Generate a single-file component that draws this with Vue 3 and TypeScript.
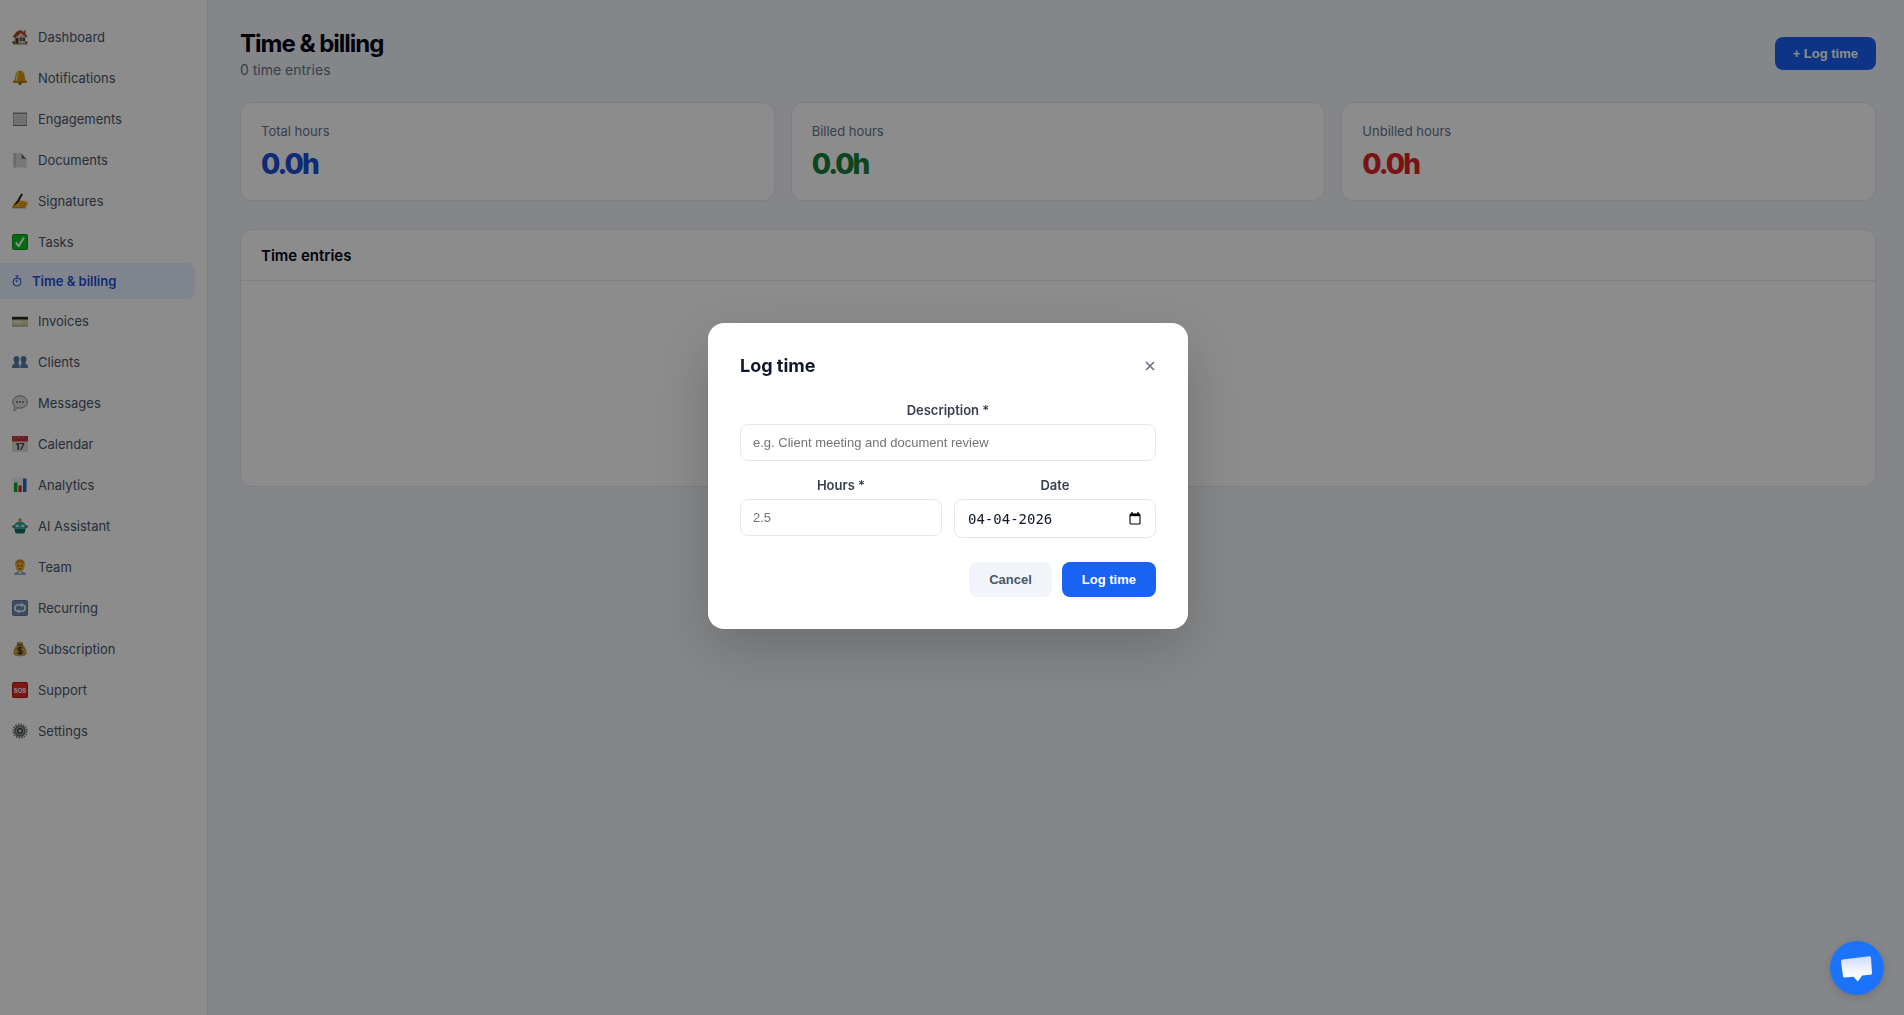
<script setup lang="ts">
import { ref } from 'vue'

interface NavItem {
  label: string
  icon: string
  active?: boolean
}

const nav: NavItem[] = [
  {
    label: 'Dashboard',
    icon: '<path d="M1 14h14v1.500H1z" fill="#5b8a3c"/><path d="M2.500 7l5-4.500 6 5V14.500h-11z" fill="#e0c3b4"/><path d="M11.500 1.500h2V6h-2z" fill="#a5553f"/><path d="M.5 7.800L5 2.200 9 1l6.500 6.300-1.300 1.200L8.800 3.800 3.200 9z" fill="#a8452f"/><path d="M3.500 9h3v5.500h-3z" fill="#5c3527"/><path d="M8 8.500h5v3.500H8z" fill="#3f5570"/><path d="M10.500 8.500V12" stroke="#e0c3b4" stroke-width=".7"/><circle cx="1.800" cy="13.300" r="1.500" fill="#4c7a34"/><circle cx="14.200" cy="13.500" r="1.300" fill="#a5553f"/>',
  },
  {
    label: 'Notifications',
    icon: '<circle cx="8" cy="13.500" r="1.600" fill="#7a5a10"/><path d="M8 .8c3 0 4.300 2 4.600 5 .3 3 .9 4.600 2.900 6.200-.3 1.300-14.700 1.300-15 0C2.500 10.400 3 8.800 3.400 5.800 3.700 2.800 5 .8 8 .8z" fill="#cf9a14"/><path d="M6 2.500c-1 2-.8 5.500-2 8.500" stroke="#ffe070" stroke-width="1.200" fill="none"/><path d="M1 12h14" stroke="#8b6408" stroke-width="1"/>',
  },
  {
    label: 'Engagements',
    icon: '<path d="M1 2h14v13H1z" fill="#d2d2d0"/><path d="M1 1.500h14V3H1z" fill="#858585"/><path d="M1 14h14v1H1z" fill="#7a746c"/><path d="M1.500 3v11M14.500 3v11" stroke="#a5a5a5"/><path d="M4 6h8M4 8.500h8M4 11h8" stroke="#c2c2c2"/>',
  },
  {
    label: 'Documents',
    icon: '<path d="M1.500 1H9l5.500 6v8.500h-13z" fill="#dadada"/><path d="M1.500 1H4v14.500H1.500z" fill="#c4c4c4"/><path d="M9 1c.8 2 .8 3.500.5 5.500 2-.3 3.500 0 5 .9z" fill="#5c5c5c"/>',
  },
  {
    label: 'Signatures',
    icon: '<path d="M0 14.500c.5-2.500 2-5 4.500-6.500l3-.8 5.500.8c2 .4 3 1.300 2.800 2.500-.4 3-3 4-6 4.200z" fill="#f5ae1b"/><path d="M8 10.200l6 .8M7.500 12.500h6" stroke="#c47e0c" stroke-width=".8"/><path d="M1 14l3-4.500L9.200.5l1.800.8-4.600 8.200z" fill="#262626"/><path d="M0 14.800h14" stroke="#9a6510" stroke-width=".9"/>',
  },
  {
    label: 'Tasks',
    icon: '<rect x="0" y="0" width="16" height="16" rx="2.500" fill="#10c024"/><rect x=".5" y=".5" width="15" height="15" rx="2" fill="none" stroke="#0b971b"/><path d="M3.800 8.500L6.700 12 12 3.500" fill="none" stroke="#fff" stroke-width="2"/>',
  },
  { label: 'Time & billing', icon: '', active: true },
  {
    label: 'Invoices',
    icon: '<rect x="0" y="3" width="16" height="10.500" rx="1" fill="#d8d0a8"/><path d="M0 4h16v2.500H0z" fill="#222a20"/><path d="M2 9h8" stroke="#f2efdc" stroke-width="1.500"/><path d="M0 12.500h16v1H0z" fill="#a9a27e"/>',
  },
  {
    label: 'Clients',
    icon: '<path d="M4.500 2c1.900 0 2.900 1.300 2.800 3.200-.1 2-.9 3-1 4.800 1.100.3 1.500 1.200 1.500 4H0c0-3 .9-3.600 2.700-4.200C2.700 8.300 1.700 7.400 1.500 5.200 1.500 3.200 2.700 2 4.500 2z" fill="#547ca5"/><path d="M11.500 2c2 0 3 1.200 3 3.200-.1 2.200-1 3.100-1.100 4.600 1.800.6 2.600 1.200 2.600 4.200H8.400c0-2.800.1-3.700 1.200-4.200 0-1.600-1-2.600-1-4.600C8.600 3.200 9.700 2 11.500 2z" fill="#547ca5"/>',
  },
  {
    label: 'Messages',
    icon: '<ellipse cx="8" cy="7" rx="7.300" ry="6.200" fill="#e2e2e2" stroke="#858585"/><path d="M2 11.500c.5 1.500.3 2.500-.5 4 2.500-.3 3.500-1.300 4-2.800" fill="#e2e2e2" stroke="#858585" stroke-width=".8"/><circle cx="5" cy="7" r=".9" fill="#555"/><circle cx="8" cy="7" r=".9" fill="#555"/><circle cx="11" cy="7" r=".9" fill="#555"/>',
  },
  {
    label: 'Calendar',
    icon: '<path d="M0 5h16v11H0z" fill="#dfddd6"/><path d="M0 0h16v5.500H0z" fill="#c3343c"/><path d="M2 1.500h12" stroke="#e9a0a3" stroke-width=".8" stroke-dasharray="1.500 2.500"/><text x="8" y="13.800" text-anchor="middle" font-size="9" font-weight="700" font-family="Inter, sans-serif" fill="#333">17</text>',
  },
  {
    label: 'Analytics',
    icon: '<rect x=".5" y=".5" width="15" height="15" fill="#eee"/><path d="M2 5.500h3.400V15H2z" fill="#10a32f"/><path d="M6.500 8.500h3.200V15H6.500z" fill="#c72a36"/><path d="M11 1.500h3.400V15H11z" fill="#1868c4"/>',
  },
  {
    label: 'AI Assistant',
    icon: '<circle cx="8" cy="2" r="1.700" fill="#c88a3a"/><circle cx="1.800" cy="8.500" r="1.600" fill="#b1323c"/><circle cx="14.200" cy="8.500" r="1.600" fill="#b1323c"/><path d="M4 4.800C5.500 3.400 10.500 3.400 12 4.800l2.300 2.700c1 1.300.3 3-1 3.800H2.700C1.400 10.500.7 8.800 1.700 7.500z" fill="#3aa898"/><path d="M2.500 11h11l-.5 3c-.3 1.100-1 1.500-2 1.500H5c-1 0-1.700-.4-2-1.500z" fill="#167568"/><ellipse cx="5.300" cy="8" rx="1.700" ry="1.300" fill="#b9f0e6"/><ellipse cx="10.700" cy="8" rx="1.700" ry="1.300" fill="#b9f0e6"/><path d="M5 12.800h6" stroke="#0b5148"/>',
  },
  {
    label: 'Team',
    icon: '<path d="M2 16c0-2.500 2-3.500 6-3.500s6 1 6 3.500z" fill="#8db0cf"/><path d="M6 12h4l-2 3.500z" fill="#f1f1f1"/><ellipse cx="8" cy="6.800" rx="4.600" ry="6" fill="#eeb02b"/><path d="M3.300 6C3 2 5 .4 8 .4s5 1.600 4.700 5.600C12 4 11 3.500 9 3.500S4.500 4 3.300 6z" fill="#c98f1f"/><circle cx="6.200" cy="6.800" r=".7" fill="#41300c"/><circle cx="9.800" cy="6.800" r=".7" fill="#41300c"/><path d="M6.300 9.800h3.400" stroke="#7a5110" stroke-width=".9"/>',
  },
  {
    label: 'Recurring',
    icon: '<rect x="0" y="0" width="16" height="16" rx="2.500" fill="#6f8fb4"/><rect x=".5" y=".5" width="15" height="15" rx="2" fill="none" stroke="#5b7ba3"/><path d="M10 5H6C2 5 2 10.500 5 11M6.500 11.200H10c4-.2 4-5.700 1-6" fill="none" stroke="#eef3f8" stroke-width="1.600"/><path d="M9 2.800L12 5 9 7.200zM7.500 9L4.500 11.200l3 2.200z" fill="#eef3f8"/>',
  },
  {
    label: 'Subscription',
    icon: '<path d="M5.500 3.500L4.500 1l2 .6L8 .3l1.500 1.300 2-.6-1 2.500c3 2.500 4.500 6 4 9.500-.5 3-12.500 3-13 0-.5-3.500 1-7 4-9.500z" fill="#c79b45"/><path d="M5 3.800h6" stroke="#6b4a14" stroke-width="1.200"/><path d="M10.300 7.200C9 6 5.800 6.200 5.900 8c.1 1.700 4.300 1.200 4.400 3 .1 1.900-3.300 2.100-4.700.8M8 5.500v8.300" fill="none" stroke="#2e2a1c" stroke-width="1.200"/>',
  },
  {
    label: 'Support',
    icon: '<rect x="0" y="0" width="16" height="16" rx="2.500" fill="#e22a22"/><rect x=".5" y=".5" width="15" height="15" rx="2" fill="none" stroke="#b51c16"/><text x="8" y="10.500" text-anchor="middle" font-size="6" font-weight="700" font-family="Inter, sans-serif" fill="#fff">SOS</text>',
  },
  {
    label: 'Settings',
    icon: '<circle cx="8" cy="8" r="6.600" fill="none" stroke="#6a6f71" stroke-width="2" stroke-dasharray="1.400 1.200"/><circle cx="8" cy="8" r="5" fill="#a4a9ab" stroke="#5a5f61" stroke-width="1.300"/><circle cx="8" cy="8" r="2.700" fill="#6a6f71" stroke="#3d4244"/><circle cx="8" cy="8" r="1.200" fill="#d5d9db"/>',
  },
]

const stats = [
  { label: 'Total hours', value: '0.0h', tone: 'blue' },
  { label: 'Billed hours', value: '0.0h', tone: 'green' },
  { label: 'Unbilled hours', value: '0.0h', tone: 'red' },
]

const description = ref('')
const hours = ref('')
const date = ref('04-04-2026')
const open = ref(true)
</script>

<template>
  <div class="app">
    <nav class="sidebar">
      <a v-for="item in nav" :key="item.label" href="#" class="nav-item" :class="{ active: item.active }">
        <svg v-if="item.active" class="watch" viewBox="0 0 10 12" fill="none" stroke="currentColor">
          <circle cx="5" cy="7" r="4" />
          <path d="M3.500 1h3M5 1v2M5 7V4.500M5 7l-1.500-1M8 3l1 1" />
        </svg>
        <svg v-else class="icon" viewBox="0 0 16 16" v-html="item.icon"></svg>
        <span>{{ item.label }}</span>
      </a>
    </nav>

    <main class="main">
      <header class="page-head">
        <div>
          <h1>Time &amp; billing</h1>
          <p>0 time entries</p>
        </div>
        <button type="button" class="btn primary top" @click="open = true">+ Log time</button>
      </header>

      <section class="stats">
        <div v-for="s in stats" :key="s.label" class="card">
          <div class="stat-label">{{ s.label }}</div>
          <div class="stat-value" :class="s.tone">{{ s.value }}</div>
        </div>
      </section>

      <section class="panel">
        <h2>Time entries</h2>
        <div class="panel-body"></div>
      </section>
    </main>

    <div v-if="open" class="overlay">
      <form class="modal" role="dialog" aria-labelledby="modal-title" @submit.prevent>
        <div class="modal-head">
          <h3 id="modal-title">Log time</h3>
          <button type="button" class="close" aria-label="Close" @click="open = false">
            <svg viewBox="0 0 10 10" fill="none" stroke="currentColor" stroke-width="1.700">
              <path d="M1 1l8 8M9 1L1 9" />
            </svg>
          </button>
        </div>
        <div class="field">
          <label for="description">Description *</label>
          <input id="description" v-model="description" type="text" placeholder="e.g. Client meeting and document review" />
        </div>
        <div class="row">
          <div class="field">
            <label for="hours">Hours *</label>
            <input id="hours" v-model="hours" type="text" placeholder="2.5" />
          </div>
          <div class="field">
            <label for="date">Date</label>
            <div class="date-box">
              <input id="date" v-model="date" type="text" />
              <button type="button" class="picker" aria-label="Show date picker">
                <svg viewBox="0 0 12 13" fill="none" stroke="currentColor">
                  <rect x="1" y="2" width="10" height="10" rx="1" stroke-width="1.100" />
                  <path d="M1 3h10" stroke-width="2.400" />
                  <path d="M3 0v2M9 0v2" stroke-width="1.300" />
                </svg>
              </button>
            </div>
          </div>
        </div>
        <div class="actions">
          <button type="button" class="btn cancel" @click="open = false">Cancel</button>
          <button type="submit" class="btn primary">Log time</button>
        </div>
      </form>
    </div>

    <button type="button" class="chat" aria-label="Open chat">
      <svg viewBox="0 0 54 54">
        <defs>
          <linearGradient id="bubble" x1="0" y1="0" x2="0" y2="1">
            <stop offset="0" stop-color="#ccdafb" />
            <stop offset="0.600" stop-color="#f4f7ff" />
            <stop offset="1" stop-color="#fff" />
          </linearGradient>
        </defs>
        <path
          d="M12.500 18.500L39 15.300q1.800-.2 2 1.500L42 32q.1 1.500-1.500 1.700l-8.300.8L27.800 40.500 23.500 35.800l-8.700.8q-1.600.1-1.800-1.500l-2-14.800q-.2-1.600 1.500-1.800z"
          fill="url(#bubble)"
        />
      </svg>
    </button>
  </div>
</template>

<style>
body {
  background: #f1f5f9;
}
</style>

<style scoped>
* {
  box-sizing: border-box;
}
.app {
  display: flex;
  min-height: 100vh;
  background: #f1f5f9;
  font-family: Inter, 'Liberation Sans', sans-serif;
  color: #0f172a;
}
h1,
h2,
h3,
p {
  margin: 0;
}
.sidebar {
  flex: none;
  width: 208px;
  padding: 17px 12px 16px 0;
  display: flex;
  flex-direction: column;
  gap: 2px;
  background: #fff;
  border-right: 1px solid #e2e8f0;
}
.nav-item {
  display: flex;
  align-items: center;
  gap: 10px;
  height: 39px;
  padding: 0 12px;
  border-radius: 0 8px 8px 0;
  font-size: 13px;
  color: #475569;
  text-decoration: none;
}
.nav-item.active {
  height: 36px;
  background: #eaf1ff;
  color: #1d4ed8;
  font-weight: 600;
}
.icon {
  width: 16px;
  height: 16px;
}
.watch {
  width: 10px;
  height: 12px;
}
.main {
  flex: 1;
  min-width: 0;
  padding: 29px 28px 28px 32px;
}
.page-head {
  display: flex;
  align-items: flex-start;
  justify-content: space-between;
  margin-bottom: 22px;
}
h1 {
  font-size: 24px;
  line-height: 30px;
  font-weight: 700;
  letter-spacing: -1px;
  color: #020617;
}
.page-head p {
  font-size: 14px;
  line-height: 21px;
  color: #64748b;
}
.btn {
  height: 35px;
  padding: 0 20px;
  border: 0;
  border-radius: 8px;
  font: bold 13px 'Liberation Sans', Arial, sans-serif;
}
.primary {
  background: #1a62f2;
  color: #fff;
}
.top {
  height: 33px;
  margin-top: 8px;
  padding: 0 18px;
}
.stats {
  display: grid;
  grid-template-columns: repeat(3, 1fr);
  gap: 16px;
  margin-bottom: 28px;
}
.card {
  height: 99px;
  padding: 20px;
  background: #fff;
  border: 1px solid #e2e8f0;
  border-radius: 12px;
}
.stat-label {
  margin-bottom: 8px;
  font-size: 13px;
  line-height: 16px;
  color: #64748b;
}
.stat-value {
  font-size: 28px;
  line-height: 34px;
  font-weight: 800;
  letter-spacing: -2px;
}
.blue {
  color: #1d4ed8;
}
.green {
  color: #15803d;
}
.red {
  color: #dc2626;
}
.panel {
  background: #fff;
  border: 1px solid #e2e8f0;
  border-radius: 12px;
}
.panel h2 {
  height: 51px;
  padding: 0 20px;
  font-size: 15px;
  line-height: 52px;
  font-weight: 600;
  color: #020617;
  border-bottom: 1px solid #e2e8f0;
}
.panel-body {
  height: 205px;
}
.overlay {
  position: fixed;
  inset: 0;
  display: flex;
  align-items: center;
  justify-content: center;
  padding: 0 8px 63px 0;
  background: rgba(0, 0, 0, 0.45);
}
.modal {
  width: 480px;
  padding: 32px;
  background: #fff;
  border-radius: 16px;
  box-shadow: 0 20px 60px rgba(0, 0, 0, 0.2);
}
.modal-head {
  display: flex;
  align-items: center;
  justify-content: space-between;
  height: 22px;
  margin-bottom: 25px;
}
.modal-head h3 {
  font-size: 18px;
  line-height: 22px;
  font-weight: 700;
}
.close {
  display: flex;
  padding: 1px;
  border: 0;
  background: none;
  color: #6b7280;
}
.close svg {
  width: 10px;
  height: 10px;
}
.field {
  flex: 1;
  min-width: 0;
}
.field label {
  display: block;
  margin-bottom: 6px;
  font-size: 13px;
  line-height: 16px;
  font-weight: 600;
  color: #374151;
  text-align: center;
}
.field input {
  display: block;
  width: 100%;
  height: 37px;
  padding: 0 12px;
  border: 1px solid #e2e8f0;
  border-radius: 8px;
  background: #fff;
  color: #0f172a;
  font: 13px 'Liberation Sans', Arial, sans-serif;
}
.field input::placeholder {
  color: #757575;
}
.row {
  display: flex;
  gap: 12px;
  margin-top: 16px;
}
.date-box {
  display: flex;
  align-items: center;
  height: 39px;
  padding: 0 14px 0 13px;
  border: 1px solid #e2e8f0;
  border-radius: 8px;
}
.date-box input {
  flex: 1;
  min-width: 0;
  height: 35px;
  padding: 0;
  border: 0;
  font: 14px 'DejaVu Sans Mono', monospace;
}
.picker {
  display: flex;
  padding: 0;
  border: 0;
  background: none;
  color: #000;
}
.picker svg {
  width: 12px;
  height: 13px;
}
.actions {
  display: flex;
  justify-content: flex-end;
  gap: 10px;
  margin-top: 24px;
}
.cancel {
  background: #f1f5f9;
  color: #475569;
}
.chat {
  position: fixed;
  right: 20px;
  bottom: 20px;
  width: 54px;
  height: 54px;
  padding: 0;
  border: 0;
  border-radius: 50%;
  background: #1a73fa;
  box-shadow: 0 2px 8px rgba(0, 0, 0, 0.15);
}
.chat svg {
  display: block;
}
</style>
